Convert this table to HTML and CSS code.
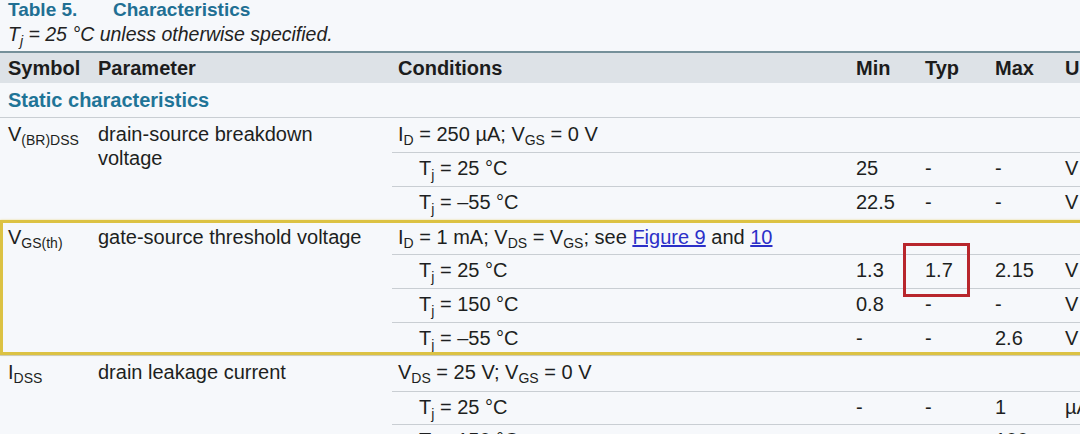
FILE: index.html
```html
<!DOCTYPE html>
<html>
<head>
<meta charset="utf-8">
<link rel="stylesheet" href="styles.css">
</head>
<body>
<div class="page">
  <div class="caption"><span class="tnum">Table 5.</span><span class="ttl">Characteristics</span></div>
  <div class="note">T<sub class="sj">j</sub> = 25 °C unless otherwise specified.</div>
  <div class="table">
    <div class="head">
      <div class="hc">Symbol</div>
      <div class="hc">Parameter</div>
      <div class="hc">Conditions</div>
      <div class="hc">Min</div>
      <div class="hc">Typ</div>
      <div class="hc">Max</div>
      <div class="hc">Unit</div>
    </div>
    <div class="section">Static characteristics</div>

    <div class="group">
      <div class="sym">V<sub>(BR)DSS</sub></div>
      <div class="param">drain-source breakdown<br>voltage</div>
      <div class="conds">
        <div class="sub"><div class="c">I<sub>D</sub> = 250 µA; V<sub>GS</sub> = 0 V</div><div></div><div></div><div></div><div></div></div>
        <div class="sub"><div class="c ind">T<sub class="sj">j</sub> = 25 °C</div><div>25</div><div>-</div><div>-</div><div>V</div></div>
        <div class="sub"><div class="c ind">T<sub class="sj">j</sub> = –55 °C</div><div>22.5</div><div>-</div><div>-</div><div>V</div></div>
      </div>
    </div>

    <div class="group hl">
      <div class="sym">V<sub>GS(th)</sub></div>
      <div class="param">gate-source threshold voltage</div>
      <div class="conds">
        <div class="sub short"><div class="c">I<sub>D</sub> = 1 mA; V<sub>DS</sub> = V<sub>GS</sub>; see <a class="lnk" href="#">Figure 9</a> and <a class="lnk" href="#">10</a></div><div></div><div></div><div></div><div></div></div>
        <div class="sub"><div class="c ind">T<sub class="sj">j</sub> = 25 °C</div><div>1.3</div><div class="marked">1.7<span class="mark"></span></div><div>2.15</div><div>V</div></div>
        <div class="sub"><div class="c ind">T<sub class="sj">j</sub> = 150 °C</div><div>0.8</div><div>-</div><div>-</div><div>V</div></div>
        <div class="sub short"><div class="c ind">T<sub class="sj">j</sub> = –55 °C</div><div>-</div><div>-</div><div>2.6</div><div>V</div></div>
      </div>
    </div>

    <div class="group">
      <div class="sym">I<sub>DSS</sub></div>
      <div class="param">drain leakage current</div>
      <div class="conds">
        <div class="sub tall"><div class="c">V<sub>DS</sub> = 25 V; V<sub>GS</sub> = 0 V</div><div></div><div></div><div></div><div></div></div>
        <div class="sub short"><div class="c ind">T<sub class="sj">j</sub> = 25 °C</div><div>-</div><div>-</div><div>1</div><div>µA</div></div>
        <div class="sub"><div class="c ind">T<sub class="sj">j</sub> = 150 °C</div><div>-</div><div>-</div><div>100</div><div>µA</div></div>
      </div>
    </div>
  </div>
</div>
</body>
</html>
```

FILE: styles.css
```css
html, body {
  margin: 0;
  padding: 0;
  background: #f6f8fb;
  overflow: hidden;
}
body {
  width: 1080px;
  height: 434px;
  font-family: "Liberation Sans", Arial, sans-serif;
  color: #1d1f21;
}
.page {
  width: 1130px;
}
.caption {
  padding-left: 8px;
  font-size: 19px;
  line-height: 20px;
  font-weight: bold;
  color: #216f93;
  display: flex;
}
.tnum {
  width: 105px;
}
.note {
  padding-left: 8px;
  margin-top: 3px;
  font-size: 19.5px;
  line-height: 22px;
  font-style: italic;
  color: #222;
}
sub {
  font-size: 14px;
  line-height: 0;
  vertical-align: -4px;
}
sub.sj {
  font-size: 14px;
  vertical-align: -5px;
}
.table {
  margin-top: 6px;
  font-size: 20px;
}
.head {
  display: grid;
  grid-template-columns: 92px 300px 458px 69px 70px 70px 1fr;
  height: 32px;
  box-sizing: border-box;
  border-top: 2px solid #75909a;
  background: #dde2e7;
  font-weight: bold;
  align-items: center;
  color: #1c1c1c;
}
.hc {
  padding-left: 6px;
  line-height: 24px;
}
.hc:first-child {
  padding-left: 8px;
}
.section {
  height: 35px;
  box-sizing: border-box;
  border-bottom: 1px solid #c9ced3;
  padding: 5px 0 0 8px;
  line-height: 24px;
  font-weight: bold;
  color: #1f7497;
}
.group {
  display: grid;
  grid-template-columns: 92px 300px 1fr;
  border-bottom: 1px solid #c9ced3;
  line-height: 24px;
}
.group.hl {
  position: relative;
}
.group.hl::after {
  content: "";
  position: absolute;
  left: 0;
  right: 0;
  top: -1px;
  bottom: 0;
  border: 3px solid #dcc243;
  box-shadow: 0 0 2px rgba(230, 200, 70, 0.6);
  pointer-events: none;
}
.sym {
  padding: 4px 0 0 8px;
}
.param {
  padding: 4px 0 0 6px;
}
.sub {
  display: grid;
  grid-template-columns: 458px 69px 70px 70px 1fr;
  height: 34px;
  box-sizing: border-box;
  padding-top: 4px;
}
.sub.short {
  height: 33px;
}
.sub.tall {
  height: 35px;
}
.sub + .sub {
  border-top: 1px solid #c9ced3;
  padding-top: 3px;
}
.sub > div {
  padding-left: 6px;
  white-space: nowrap;
}
.sub > .c.ind {
  padding-left: 27px;
}
.lnk {
  color: #2b2fc8;
  text-decoration: underline;
}
.marked {
  position: relative;
}
.mark {
  position: absolute;
  left: -16px;
  top: -15px;
  width: 67px;
  height: 54px;
  box-sizing: border-box;
  border: 3px solid #b8262c;
}
```
